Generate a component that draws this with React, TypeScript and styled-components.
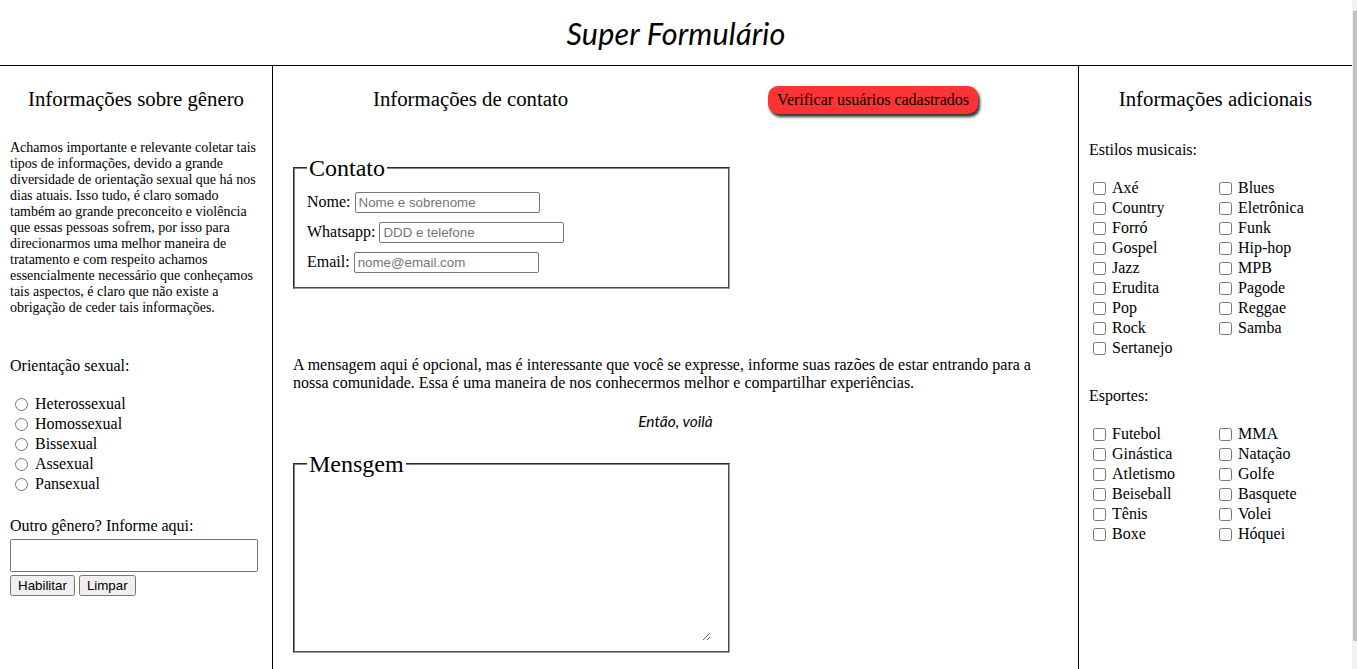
import React from "react";
import styled, { createGlobalStyle } from "styled-components";

const Global = createGlobalStyle`
  html, body { margin: 0; padding: 0; }
  body {
    font-family: "Liberation Serif", "Times New Roman", serif;
    font-size: 16px;
    color: #000;
    background: #fff;
  }
`;

const Page = styled.div`
  width: calc(100% - 5px);
`;

const FakeScrollbar = styled.div`
  position: fixed;
  top: 0;
  right: 0;
  width: 5px;
  height: 100%;
  background: #f1f1f1;
  &::after {
    content: "";
    position: absolute;
    left: 1px;
    right: 0;
    top: 11px;
    bottom: 28px;
    background: #c1c1c1;
  }
`;

const Header = styled.header`
  height: 65px;
  border-bottom: 1px solid #000;
  display: flex;
  align-items: center;
  justify-content: center;
`;

const Title = styled.h1`
  margin: 0;
  font-family: "Lato", "Noto Sans", sans-serif;
  font-style: italic;
  font-weight: 400;
  font-size: 30.5px;
  letter-spacing: 0.2px;
`;

const Main = styled.main`
  display: flex;
  min-height: 624px;
`;

const Side = styled.section<{ $border?: boolean }>`
  box-sizing: border-box;
  width: 273px;
  flex: none;
  padding: 0 10px;
  border-right: ${(p) => (p.$border ? "1px solid #000" : "none")};
`;

const Center = styled.section`
  box-sizing: border-box;
  flex: 1;
  border-right: 1px solid #000;
  padding: 0 0 16px;
`;

const Heading = styled.h2`
  margin: 21px 0 0;
  font-size: 20.8px;
  line-height: 23px;
  font-weight: 400;
  text-align: center;
  white-space: nowrap;
`;

const Intro = styled.p`
  margin: 30px 0 0;
  font-size: 14px;
  line-height: 16px;
`;

const Label = styled.div<{ $top: number }>`
  margin-top: ${(p) => p.$top}px;
  line-height: 18px;
`;

const OptionList = styled.div<{ $top: number }>`
  margin-top: ${(p) => p.$top}px;
  display: flex;
  flex-direction: column;
`;

const OptionGrid = styled.div<{ $top: number }>`
  margin-top: ${(p) => p.$top}px;
  display: grid;
  grid-template-columns: 126px 126px;
  grid-auto-flow: row;
`;

const Option = styled.label`
  display: flex;
  align-items: center;
  height: 20px;
  line-height: 18px;
  input { margin: 0 6px 0 4px; width: 13px; height: 13px; }
  input[type="radio"] { margin: 0 7px 0 5px; }
`;

const OtherInput = styled.input`
  box-sizing: border-box;
  display: block;
  margin-top: 4px;
  width: 248px;
  height: 33px;
`;

const ButtonRow = styled.div`
  display: flex;
  gap: 4px;
  margin-top: 3px;
`;

const SmallButton = styled.button`
  font-family: "Liberation Sans", Arial, sans-serif;
  font-size: 13.33px;
  height: 21px;
  padding: 1px 6px;
`;

const TopRow = styled.div`
  display: flex;
  justify-content: space-around;
  align-items: flex-start;
`;

const VerifyButton = styled.button`
  margin-top: 20px;
  font-family: "Liberation Serif", "Times New Roman", serif;
  font-size: 16px;
  height: 28px;
  padding: 0 9px;
  border: none;
  border-radius: 10px;
  background: #ff3333;
  color: #000;
  box-shadow: 2px 3px 3px #333;
`;

const Fieldset = styled.fieldset<{ $top: number }>`
  box-sizing: border-box;
  width: 437px;
  margin: ${(p) => p.$top}px 0 0 20px;
  padding: 5px 12px 10px;
  border: 2px groove #c0c0c0;
  border-color: #808080 #a0a0a0 #a0a0a0 #808080;
`;

const Legend = styled.legend`
  font-size: 24px;
  line-height: 28px;
  padding: 0 2px;
  margin-left: 0;
`;

const FieldRow = styled.div`
  display: flex;
  align-items: center;
  height: 30px;
  gap: 4px;
`;

const TextInput = styled.input`
  box-sizing: border-box;
  width: 185px;
  height: 21px;
  font-family: "Liberation Sans", Arial, sans-serif;
  font-size: 13.33px;
  padding: 1px 3px;
  border: 1px solid #767676;
  border-radius: 2px;
  &::placeholder { color: #757575; }
`;

const Message = styled.p`
  margin: 67px 20px 0;
  line-height: 18px;
`;

const Voila = styled.p`
  margin: 20px 0 0;
  text-align: center;
  font-family: "Lato", "Noto Sans", sans-serif;
  font-style: italic;
  font-size: 15.5px;
  line-height: 18px;
`;

const TextArea = styled.textarea`
  display: block;
  box-sizing: border-box;
  width: 404px;
  height: 158px;
  border: none;
  outline: none;
  resize: both;
`;

const music = [
  ["Axé", "Blues"],
  ["Country", "Eletrônica"],
  ["Forró", "Funk"],
  ["Gospel", "Hip-hop"],
  ["Jazz", "MPB"],
  ["Erudita", "Pagode"],
  ["Pop", "Reggae"],
  ["Rock", "Samba"],
  ["Sertanejo"],
];

const sports = [
  ["Futebol", "MMA"],
  ["Ginástica", "Natação"],
  ["Atletismo", "Golfe"],
  ["Beiseball", "Basquete"],
  ["Tênis", "Volei"],
  ["Boxe", "Hóquei"],
];

const orientations = ["Heterossexual", "Homossexual", "Bissexual", "Assexual", "Pansexual"];

function Checks({ rows, top }: { rows: string[][]; top: number }) {
  return (
    <OptionGrid $top={top}>
      {rows.flatMap((r) =>
        r.map((name) => (
          <Option key={name}>
            <input type="checkbox" />
            {name}
          </Option>
        ))
      )}
    </OptionGrid>
  );
}

export default function App() {
  return (
    <>
      <Global />
      <Page>
        <Header>
          <Title>Super Formulário</Title>
        </Header>
        <Main>
          <Side $border>
            <Heading>Informações sobre gênero</Heading>
            <Intro>
              Achamos importante e relevante coletar tais tipos de informações, devido a grande
              diversidade de orientação sexual que há nos dias atuais. Isso tudo, é claro somado
              também ao grande preconceito e violência que essas pessoas sofrem, por isso para
              direcionarmos uma melhor maneira de tratamento e com respeito achamos essencialmente
              necessário que conheçamos tais aspectos, é claro que não existe a obrigação de ceder
              tais informações.
            </Intro>
            <Label $top={41}>Orientação sexual:</Label>
            <OptionList $top={19}>
              {orientations.map((o) => (
                <Option key={o}>
                  <input type="radio" name="orientacao" />
                  {o}
                </Option>
              ))}
            </OptionList>
            <Label $top={23}>Outro gênero? Informe aqui:</Label>
            <OtherInput type="text" />
            <ButtonRow>
              <SmallButton>Habilitar</SmallButton>
              <SmallButton>Limpar</SmallButton>
            </ButtonRow>
          </Side>
          <Center>
            <TopRow>
              <Heading>Informações de contato</Heading>
              <VerifyButton>Verificar usuários cadastrados</VerifyButton>
            </TopRow>
            <Fieldset $top={40}>
              <Legend>Contato</Legend>
              <FieldRow>
                Nome: <TextInput placeholder="Nome e sobrenome" />
              </FieldRow>
              <FieldRow>
                Whatsapp: <TextInput placeholder="DDD e telefone" />
              </FieldRow>
              <FieldRow>
                Email: <TextInput placeholder="nome@email.com" />
              </FieldRow>
            </Fieldset>
            <Message>
              A mensagem aqui é opcional, mas é interessante que você se expresse, informe suas
              razões de estar entrando para a nossa comunidade. Essa é uma maneira de nos
              conhecermos melhor e compartilhar experiências.
            </Message>
            <Voila>Então, voilà</Voila>
            <Fieldset $top={20}>
              <Legend>Mensgem</Legend>
              <TextArea />
            </Fieldset>
          </Center>
          <Side>
            <Heading>Informações adicionais</Heading>
            <Label $top={31}>Estilos musicais:</Label>
            <Checks rows={music} top={19} />
            <Label $top={29}>Esportes:</Label>
            <Checks rows={sports} top={19} />
          </Side>
        </Main>
      </Page>
      <FakeScrollbar />
    </>
  );
}
